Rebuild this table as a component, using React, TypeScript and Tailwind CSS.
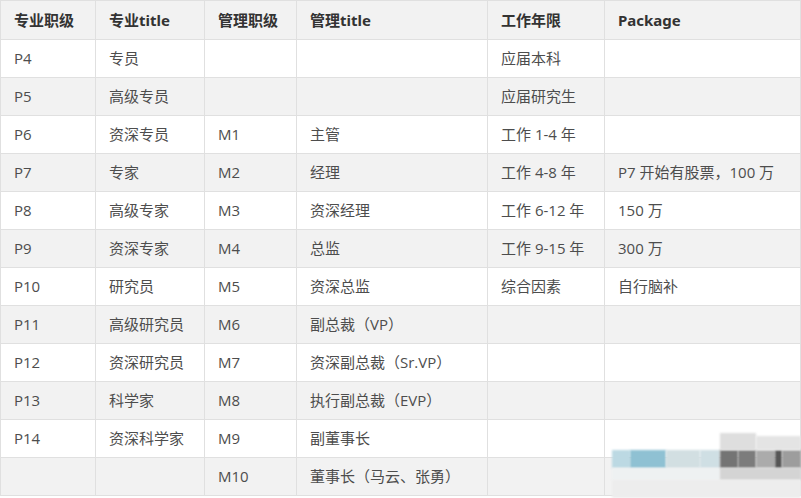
const header = ['专业职级', '专业title', '管理职级', '管理title', '工作年限', 'Package']

const rows: string[][] = [
  ['P4', '专员', '', '', '应届本科', ''],
  ['P5', '高级专员', '', '', '应届研究生', ''],
  ['P6', '资深专员', 'M1', '主管', '工作 1-4 年', ''],
  ['P7', '专家', 'M2', '经理', '工作 4-8 年', 'P7 开始有股票，100 万'],
  ['P8', '高级专家', 'M3', '资深经理', '工作 6-12 年', '150 万'],
  ['P9', '资深专家', 'M4', '总监', '工作 9-15 年', '300 万'],
  ['P10', '研究员', 'M5', '资深总监', '综合因素', '自行脑补'],
  ['P11', '高级研究员', 'M6', '副总裁（VP）', '', ''],
  ['P12', '资深研究员', 'M7', '资深副总裁（Sr.VP）', '', ''],
  ['P13', '科学家', 'M8', '执行副总裁（EVP）', '', ''],
  ['P14', '资深科学家', 'M9', '副董事长', '', ''],
  ['', '', 'M10', '董事长（马云、张勇）', '', ''],
]

const widths = ['w-[95px]', 'w-[109px]', 'w-[92px]', 'w-[191px]', 'w-[117px]', 'w-[196px]']

// pixelated watermark in the bottom-right corner
const blur = [
  { c: 'left-[612px] top-[450px] w-[18px] h-[18px] bg-[#bcd9e3]' },
  { c: 'left-[630px] top-[450px] w-[36px] h-[18px] bg-[#8fc1d3]' },
  { c: 'left-[666px] top-[450px] w-[34px] h-[18px] bg-[#d2dfe2]' },
  { c: 'left-[700px] top-[450px] w-[20px] h-[18px] bg-[#cfdfe4]' },
  { c: 'left-[720px] top-[450px] w-[18px] h-[18px] bg-[#747474]' },
  { c: 'left-[738px] top-[450px] w-[18px] h-[18px] bg-[#7c7c7c]' },
  { c: 'left-[756px] top-[450px] w-[19px] h-[18px] bg-[#ababab]' },
  { c: 'left-[775px] top-[450px] w-[7px] h-[18px] bg-[#565656]' },
  { c: 'left-[782px] top-[450px] w-[19px] h-[18px] bg-[#9d9d9d]' },
  { c: 'left-[720px] top-[433px] w-[36px] h-[17px] bg-[#dedede]' },
  { c: 'left-[756px] top-[436px] w-[45px] h-[14px] bg-[#e4e4e4]' },
  { c: 'left-[612px] top-[468px] w-[108px] h-[12px] bg-[#eef1f2]' },
  { c: 'left-[720px] top-[468px] w-[81px] h-[12px] bg-[#d4d4d4]' },
  { c: 'left-[612px] top-[480px] w-[189px] h-[18px] bg-[#ededed]' },
]

export default function App() {
  return (
    <div
      className="relative h-[498px] w-[801px] overflow-hidden bg-white"
      style={{ fontFamily: '"Open Sans", "Noto Sans CJK SC", sans-serif' }}
    >
      <table className="border-collapse border border-[#e0e0e0] text-[15px] leading-none">
        <thead>
          <tr className="h-[39px] bg-[#f2f2f2] font-['Noto_Sans','Noto_Sans_CJK_SC',sans-serif]">
            {header.map((h, i) => (
              <th
                key={h}
                className={`${widths[i]} border border-[#e0e0e0] px-[13px] text-left font-bold text-[#333]`}
              >
                {h}
              </th>
            ))}
          </tr>
        </thead>
        <tbody>
          {rows.map((r, ri) => (
            <tr key={ri} className={ri % 2 === 0 ? 'h-[38px] bg-white' : 'h-[38px] bg-[#f2f2f2]'}>
              {r.map((c, ci) => (
                <td key={ci} className="border border-[#e0e0e0] px-[13px] text-[#4d4d4d]">
                  {c}
                </td>
              ))}
            </tr>
          ))}
        </tbody>
      </table>

      {blur.map((b, i) => (
        <div key={i} className={`absolute ${b.c} blur-[1px]`} />
      ))}
    </div>
  )
}
